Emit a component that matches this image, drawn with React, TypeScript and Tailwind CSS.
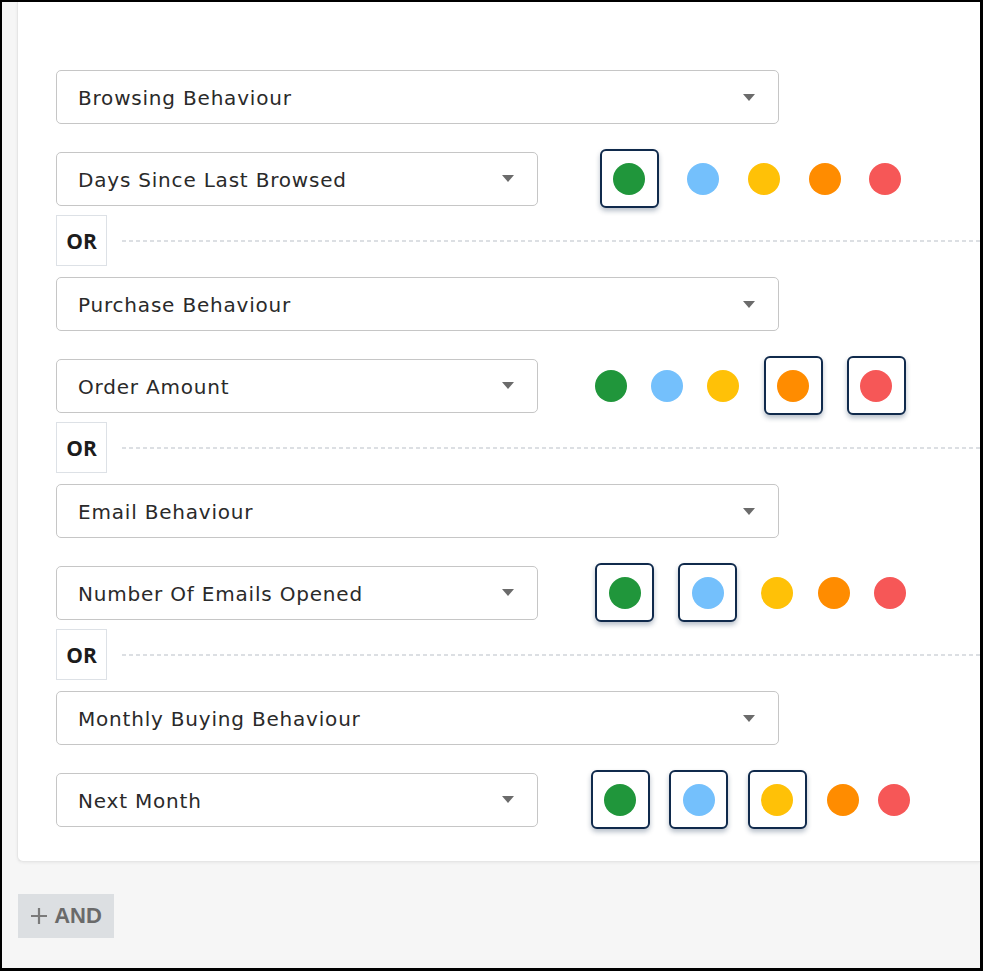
import React from "react";

type Rule = {
  category: string;
  metric: string;
  selected: boolean[];
};

const rules: Rule[] = [
  { category: "Browsing Behaviour", metric: "Days Since Last Browsed", selected: [true, false, false, false, false] },
  { category: "Purchase Behaviour", metric: "Order Amount", selected: [false, false, false, true, true] },
  { category: "Email Behaviour", metric: "Number Of Emails Opened", selected: [true, true, false, false, false] },
  { category: "Monthly Buying Behaviour", metric: "Next Month", selected: [true, true, true, false, false] },
];

const dotColors = ["bg-[#20963b]", "bg-[#74c0fc]", "bg-[#ffc107]", "bg-[#ff8c00]", "bg-[#f65757]"];

const fontStack = { fontFamily: '"DejaVu Sans", "Open Sans", sans-serif' };

function Caret() {
  return (
    <svg width="12" height="7" viewBox="0 0 12 7" className="shrink-0">
      <path d="M0 0 H12 L6 7 Z" fill="#6b6b6b" />
    </svg>
  );
}

function SelectBox({ label, wide }: { label: string; wide: boolean }) {
  return (
    <div
      className={`${wide ? "w-[723px]" : "w-[482px]"} h-[54px] shrink-0 flex items-center justify-between pl-[21px] pr-[23px] bg-white border border-[#c6c6c6] rounded-[5px]`}
    >
      <span className="pt-[2px] text-[20px] text-[#2a2a2a] tracking-[0.8px]" style={fontStack}>
        {label}
      </span>
      <Caret />
    </div>
  );
}

function Dot({ color, active }: { color: string; active: boolean }) {
  if (active) {
    return (
      <div className="w-[59px] h-[59px] flex items-center justify-center bg-white border-2 border-[#102a4c] rounded-[6px] shadow-[0_3px_5px_rgba(16,42,76,0.3)]">
        <div className={`w-[32px] h-[32px] rounded-full ${color}`} />
      </div>
    );
  }
  return <div className={`w-[32px] h-[32px] rounded-full ${color}`} />;
}

function OrDivider() {
  return (
    <div className="flex items-center mt-[7px] mb-[11px]">
      <div className="w-[51px] h-[51px] flex items-center justify-center border border-[#dde1e6] bg-white">
        <span
          className="pt-[2px] text-[21px] font-bold text-[#1c1c1c]"
          style={{ fontFamily: '"Open Sans", "Noto Sans", sans-serif' }}
        >
          OR
        </span>
      </div>
      <div className="flex-1 ml-[15px] h-[2px] bg-[repeating-linear-gradient(to_right,#dcdfe3_0px,#dcdfe3_4px,transparent_4px,transparent_7px)]" />
    </div>
  );
}

export default function App() {
  return (
    <div className="w-[983px] h-[971px] overflow-hidden border-l-2 border-t-2 border-r-[3px] border-b-[3px] border-black bg-[#f6f6f6]">
      <div className="flex flex-col">
        <div className="ml-[15px] bg-white rounded-bl-[6px] border-l border-b border-[#e6e6e6] shadow-[0_1px_3px_rgba(0,0,0,0.06)] pl-[38px] pt-[68px] pb-[32px]">
          {rules.map((rule, i) => (
            <div key={rule.category}>
              <SelectBox label={rule.category} wide />
              <div className="flex items-center mt-[25px]">
                <SelectBox label={rule.metric} wide={false} />
                <div className="ml-[33px] w-[359px] flex items-center justify-evenly">
                  {dotColors.map((c, j) => (
                    <Dot key={c} color={c} active={rule.selected[j]} />
                  ))}
                </div>
              </div>
              {i < rules.length - 1 && <OrDivider />}
            </div>
          ))}
        </div>
        <div className="ml-[16px] mt-[32px]">
          <button className="h-[44px] w-[96px] flex items-center justify-center gap-[6px] bg-[#dcdfe2]">
            <svg width="18" height="18" viewBox="0 0 18 18">
              <path d="M9 1 V17 M1 9 H17" stroke="#7a7a7a" strokeWidth="2.2" />
            </svg>
            <span className="text-[22px] font-bold text-[#6a6a6a] leading-none" style={{ fontFamily: '"Liberation Sans", Arial, sans-serif' }}>
              AND
            </span>
          </button>
        </div>
      </div>
    </div>
  );
}
